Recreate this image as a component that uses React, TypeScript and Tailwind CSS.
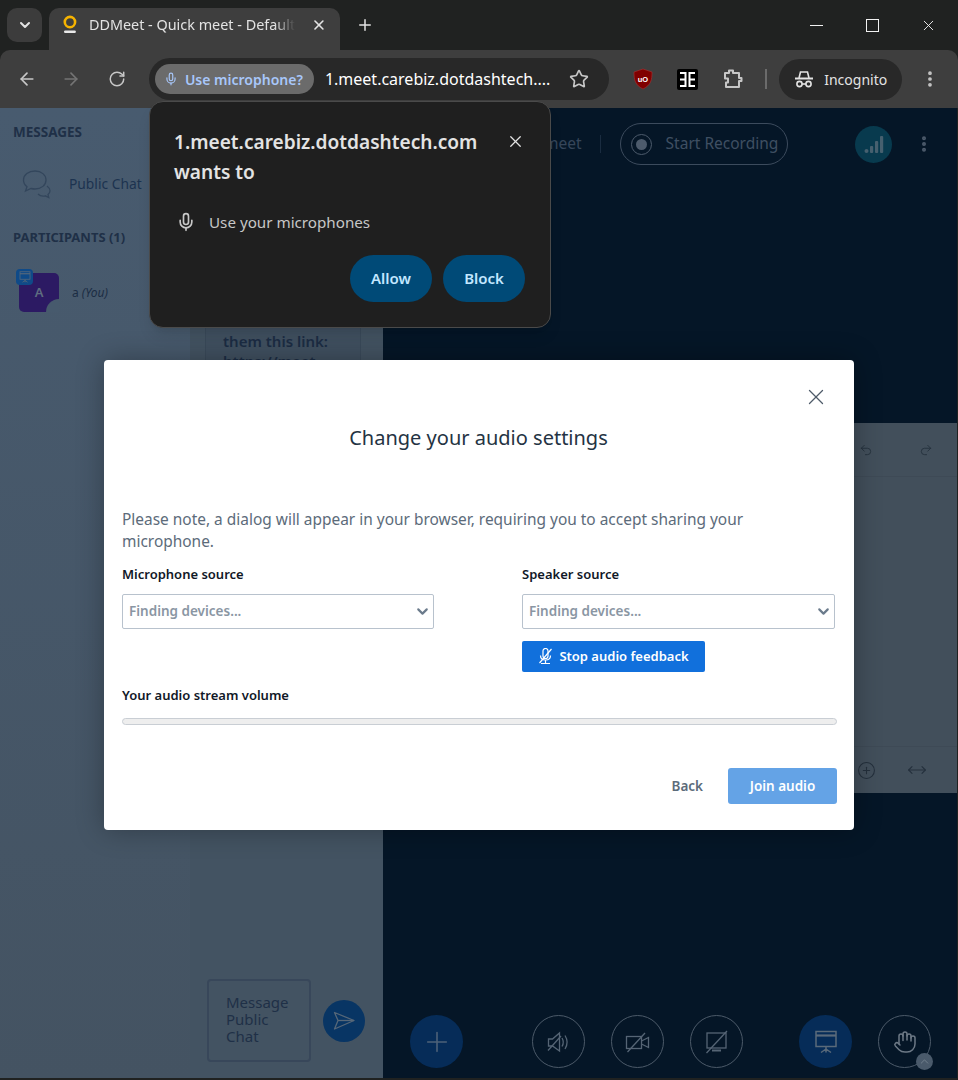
import React from 'react';
import {
  ArrowLeft,
  ArrowRight,
  ChevronDown,
  ChevronUp,
  CirclePlus,
  EllipsisVertical,
  Hand,
  Mic,
  MoveHorizontal,
  Plus,
  Redo2,
  RotateCw,
  Star,
  Undo2,
  X,
} from 'lucide-react';

const uiFont = 'font-["Noto_Sans",sans-serif]';

const Favicon = () => (
  <svg width="16" height="20" viewBox="0 0 16 20">
    <circle cx="8" cy="7" r="5.2" fill="none" stroke="#f5b301" strokeWidth="2.6" />
    <rect x="2" y="15.5" width="12" height="2.5" rx="1.2" fill="#e9e9e9" />
  </svg>
);

const IncognitoIcon = () => (
  <svg width="20" height="18" viewBox="0 0 20 18" fill="none" stroke="#e3e3e3" strokeWidth="1.6">
    <path d="M5 8l1.5-6h7L15 8" />
    <path d="M1 8.5h18" strokeWidth="2" />
    <circle cx="5.5" cy="14" r="2.6" />
    <circle cx="14.5" cy="14" r="2.6" />
    <path d="M8 14h4" />
  </svg>
);

const UBlockIcon = () => (
  <svg width="20" height="22" viewBox="0 0 20 22">
    <path d="M10 1l9 3c0 8-1 13-9 17C2 17 1 12 1 4z" fill="#800000" stroke="#a33" strokeWidth="0.6" />
    <text x="10" y="13.5" textAnchor="middle" fontSize="7.5" fontWeight="700" fill="#fff" fontFamily="Liberation Sans, sans-serif">
      uO
    </text>
  </svg>
);

const ReaderIcon = () => (
  <svg width="21" height="21" viewBox="0 0 21 21">
    <rect width="21" height="21" rx="2" fill="#000" />
    <path d="M3 3h6.500v15H3v-2h4.500v-4.500H3v-2h4.500V5H3z" fill="#fff" />
    <path d="M11.500 3H18v2h-4.500v4.500H18v2h-4.500V16H18v2h-6.500z" fill="#fff" />
  </svg>
);

const ExtensionIcon = () => (
  <svg width="22" height="22" viewBox="0 0 22 22" fill="none" stroke="#c7c7c7" strokeWidth="2" strokeLinejoin="round">
    <path d="M3 5h4V2.500h4V5h6v5h2.500v3H17v6H4v-4.500h2v-4H3z" />
  </svg>
);

const SignalIcon = () => (
  <svg width="20" height="20" viewBox="0 0 20 20" fill="#46606f">
    <circle cx="2.500" cy="17" r="2" />
    <rect x="6" y="12" width="3.200" height="7" rx="1" />
    <rect x="11" y="7" width="3.200" height="12" rx="1" />
    <rect x="16" y="2" width="3.200" height="17" rx="1" />
  </svg>
);

const PresentationIcon = ({ size = 24, color = '#5a6a7a' }: { size?: number; color?: string }) => (
  <svg width={size} height={size} viewBox="0 0 24 24" fill="none" stroke={color} strokeWidth="1.500">
    <rect x="2" y="1.500" width="20" height="15" />
    <path d="M2 5.500h20" strokeWidth="2.200" />
    <path d="M12 17v2M12 19l-5 3.500M12 19l5 3.500M12 19v3.500" />
  </svg>
);

const ChatIcon = () => (
  <svg width="32" height="32" viewBox="0 0 32 32" fill="none" stroke="#33465c" strokeWidth="1.300">
    <path d="M15 3C8.500 3 3.500 6.800 3.500 12c0 2.700 1.300 5 3.500 6.700L5.500 23l5.500-2.500c1.300.3 2.600.5 4 .5 6.500 0 11-4 11-9S21.500 3 15 3z" />
    <path d="M27 18c2 1.500 3 3 3 4.800 0 1.500-.8 2.800-2 3.800l.8 3-3.500-1.800c-2.500.5-5.500 0-7.300-1.800" />
  </svg>
);

const SendIcon = () => (
  <svg width="22" height="20" viewBox="0 0 22 20" fill="none" stroke="#566778" strokeWidth="1.300" strokeLinejoin="round">
    <path d="M1.500 1.500L21 9.500 1.500 18 5 9.500z" />
    <path d="M5 9.500h16" />
  </svg>
);

const MutedSpeakerIcon = () => (
  <svg width="26" height="26" viewBox="0 0 26 26" fill="none" stroke="#566575" strokeWidth="1.300">
    <path d="M2.500 10h4l7-6v18l-7-5h-4z" />
    <path d="M16 9c1.500 2.500 1.500 6 0 8.500M19 6.500c2.500 4 2.500 9.500 0 13.500" />
    <path d="M2 21.500L15 7" />
  </svg>
);

const MutedVideoIcon = () => (
  <svg width="26" height="26" viewBox="0 0 26 26" fill="none" stroke="#566575" strokeWidth="1.300">
    <rect x="1.500" y="7.500" width="15" height="12" />
    <path d="M16.500 12l7-3.500v10l-7-3.500" />
    <path d="M2.500 23L20 4" />
  </svg>
);

const MutedScreenIcon = () => (
  <svg width="26" height="26" viewBox="0 0 26 26" fill="none" stroke="#566575" strokeWidth="1.300">
    <rect x="3" y="4" width="19" height="15" />
    <path d="M8 21.500h9" strokeWidth="2" />
    <path d="M2.500 24L23 2" />
  </svg>
);

const FeedbackMicIcon = () => (
  <svg width="15" height="17" viewBox="0 0 15 17" fill="none" stroke="#fff" strokeWidth="1.200">
    <path d="M5 3a2.500 2.500 0 015 0v5a2.500 2.500 0 01-5 0z" />
    <path d="M2.500 7.500c0 3 2 4.500 5 4.500s5-1.500 5-4.500M7.500 12v3M3 15.500h9" />
    <path d="M1.500 15L13.500 1" />
  </svg>
);

const CircleButton = ({ children, active }: { children: React.ReactNode; active?: boolean }) => (
  <div
    className={`w-[53px] h-[53px] rounded-full flex items-center justify-center shrink-0 ${
      active ? 'bg-[#062c58]' : 'border border-[#4c5a69]'
    }`}
  >
    {children}
  </div>
);

const DeviceSelect = () => (
  <div className="h-[35px] border border-[#b8c2cd] rounded-[2px] flex items-center justify-between pl-[6px] pr-[2px] bg-white">
    <span className="text-[13.500px] font-semibold text-[#8a96a3]">Finding devices...</span>
    <ChevronDown className="w-[17px] h-[17px] text-[#6b7b8c]" strokeWidth={3} />
  </div>
);

const TabStrip = () => (
  <div className="h-[50px] bg-[#202221] flex items-start shrink-0 relative">
    <div className="w-[35px] h-[34px] mt-[8px] ml-[7px] rounded-[10px] bg-[#3c3c3c] flex items-center justify-center">
      <ChevronDown className="w-[16px] h-[16px] text-[#e3e3e3]" strokeWidth={3} />
    </div>
    <div className="w-[291px] h-[42px] mt-[8px] ml-[7px] rounded-t-[10px] bg-[#3e3e3e] flex items-center pl-[13px] pr-[13px] pb-[8px]">
      <Favicon />
      <span className="ml-[11px] w-[207px] text-[14.400px] text-[#e3e3e3] whitespace-nowrap [mask-image:linear-gradient(to_right,black_90%,transparent)]">
        DDMeet - Quick meet - Default
      </span>
      <X className="ml-[16px] w-[16px] h-[16px] text-[#e3e3e3]" strokeWidth={2.500} />
    </div>
    <Plus className="ml-[16px] mt-[16px] w-[18px] h-[18px] text-[#e3e3e3]" strokeWidth={2} />
    <div className="ml-auto flex items-center h-[50px] text-[#f2f2f2]">
      <div className="w-[13px] h-px bg-[#f2f2f2]" />
      <div className="w-[13px] h-[13px] border border-[#f2f2f2] ml-[43px]" />
      <X className="ml-[41px] mr-[21px] w-[17px] h-[17px]" strokeWidth={1.300} />
    </div>
  </div>
);

const Toolbar = () => (
  <div className="h-[58px] bg-[#3e3e3e] rounded-t-[10px] flex items-center pl-[17px] pr-[18px] shrink-0">
    <ArrowLeft className="w-[20px] h-[20px] text-[#c7c7c7]" strokeWidth={2} />
    <ArrowRight className="ml-[24px] w-[20px] h-[20px] text-[#747474]" strokeWidth={2} />
    <RotateCw className="ml-[27px] w-[18px] h-[18px] text-[#c7c7c7]" strokeWidth={2} />
    <div className="ml-[23px] w-[461px] h-[42px] rounded-full bg-[#282828] flex items-center pl-[6px] pr-[20px]">
      <div className="h-[30px] w-[159px] rounded-full bg-[#6b6b6b] flex items-center pl-[9px]">
        <Mic className="w-[14px] h-[14px] text-[#a8c7fa]" strokeWidth={2} />
        <span className="ml-[7px] text-[14px] font-semibold text-[#a8c7fa] whitespace-nowrap">Use microphone?</span>
      </div>
      <span className="ml-[11px] text-[16px] text-white whitespace-nowrap">1.meet.carebiz.dotdashtech....</span>
      <Star className="ml-auto w-[20px] h-[20px] text-[#c7c7c7]" strokeWidth={2} />
    </div>
    <div className="ml-[24px] flex items-center gap-[24px]">
      <UBlockIcon />
      <ReaderIcon />
      <ExtensionIcon />
    </div>
    <div className="ml-[21px] w-[2px] h-[20px] bg-[#6b6b6b]" />
    <div className="ml-[12px] w-[123px] h-[41px] rounded-full bg-[#282828] flex items-center pl-[15px]">
      <IncognitoIcon />
      <span className="ml-[10px] text-[14px] text-[#e3e3e3]">Incognito</span>
    </div>
    <EllipsisVertical className="ml-[18px] w-[20px] h-[20px] text-[#c7c7c7]" strokeWidth={2.500} />
  </div>
);

const Sidebar = () => (
  <aside className="w-[190px] shrink-0 bg-gradient-to-b from-[#485b6f] to-[#445362] pt-[15px]">
    <p className="pl-[13px] text-[13.500px] font-bold text-[#1f3047] leading-[18px]">MESSAGES</p>
    <div className="mt-[27px] flex items-center pl-[20px]">
      <ChatIcon />
      <span className="ml-[17px] text-[13.800px] text-[#1c3350]">Public Chat</span>
    </div>
    <p className="mt-[28px] pl-[13px] text-[13px] font-bold text-[#1f3047] leading-[18px]">PARTICIPANTS (1)</p>
    <div className="mt-[27px] flex items-center pl-[19px]">
      <div className="relative w-[40px] h-[39px] rounded-[5px] bg-[#2c1a63] flex items-center justify-center text-[13px] font-semibold text-[#5f6d80]">
        A
        <div className="absolute -left-[3px] -top-[4px] w-[17px] h-[16px] rounded-[4px] bg-[#0f4a88] flex items-center justify-center">
          <PresentationIcon size={12} color="#5a6a7a" />
        </div>
        <div className="absolute right-0 bottom-0 w-[13px] h-[13px] rounded-tl-full bg-[#475a6d]" />
      </div>
      <span className="ml-[13px] text-[12px] text-[#1c2d44]">
        a <em>(You)</em>
      </span>
    </div>
  </aside>
);

const ChatPanel = () => (
  <section className="w-[193px] shrink-0 bg-[#435362] flex flex-col">
    <div className="ml-[15px] w-[156px] h-[272px] bg-[#405060] border-x border-[#3a4a5a] pt-[223px] pl-[17px] overflow-hidden shrink-0">
      <p className="text-[15px] font-semibold leading-[20px] text-[#1c2d44]">them this link:</p>
      <p className="text-[15px] font-semibold leading-[20px] text-[#1c2d44]">https://meet</p>
    </div>
    <div className="mt-auto mb-[16px] ml-[17px] flex items-center gap-[12px]">
      <div className="w-[104px] h-[83px] border-2 border-[#38475a] rounded-[4px] pl-[17px] pb-[2px] flex flex-col justify-center text-[15px] leading-[17px] text-[#1f3047]">
        <span>Message</span>
        <span>Public</span>
        <span>Chat</span>
      </div>
      <div className="w-[42px] h-[42px] rounded-full bg-[#083564] flex items-center justify-center">
        <SendIcon />
      </div>
    </div>
  </section>
);

const Whiteboard = () => (
  <div className="h-[370px] bg-[#424f5b] flex flex-col shrink-0">
    <div className="h-[54px] border-b border-[#3e4a56] flex items-center justify-end">
      <Undo2 className="mr-[46px] w-[14px] h-[14px] text-[#24303c]" strokeWidth={1.500} />
      <Redo2 className="mr-[24px] w-[14px] h-[14px] text-[#24303c]" strokeWidth={1.500} />
    </div>
    <div className="flex-1" />
    <div className="h-[47px] border-t border-[#3e4a56] flex items-center justify-end">
      <CirclePlus className="mr-[31px] w-[19px] h-[19px] text-[#24303c]" strokeWidth={1.300} />
      <MoveHorizontal className="mr-[30px] w-[20px] h-[20px] text-[#24303c]" strokeWidth={1.300} />
    </div>
  </div>
);

const MainArea = () => (
  <main className="flex-1 min-w-0 bg-[#051627] flex flex-col">
    <div className="h-[72px] shrink-0 flex items-center pr-[23px]">
      <span className="ml-[161px] text-[15.500px] text-[#36465a]">meet</span>
      <div className="ml-[18px] w-px h-[18px] bg-[#1a2c40]" />
      <div className="ml-[19px] h-[42px] w-[168px] rounded-full border border-[#3c4b5d] flex items-center pl-[10px]">
        <div className="w-[21px] h-[21px] rounded-full border border-[#4d5b6c] flex items-center justify-center">
          <div className="w-[11px] h-[11px] rounded-full bg-[#4d5b6c]" />
        </div>
        <span className="ml-[14px] text-[15.500px] text-[#3f4f62] whitespace-nowrap">Start Recording</span>
      </div>
      <div className="ml-auto w-[37px] h-[37px] rounded-full bg-[#083a4e] flex items-center justify-center">
        <SignalIcon />
      </div>
      <EllipsisVertical className="ml-[22px] w-[20px] h-[20px] text-[#4d5b6c]" strokeWidth={2.800} />
    </div>
    <div className="mt-[243px]">
      <Whiteboard />
    </div>
    <div className="mt-auto pb-[10px] flex items-center pl-[27px] pr-[26px]">
      <CircleButton active>
        <Plus className="w-[32px] h-[32px] text-[#4d6178]" strokeWidth={1.200} />
      </CircleButton>
      <div className="ml-[69px]">
        <CircleButton>
          <MutedSpeakerIcon />
        </CircleButton>
      </div>
      <div className="ml-[26px]">
        <CircleButton>
          <MutedVideoIcon />
        </CircleButton>
      </div>
      <div className="ml-[26px]">
        <CircleButton>
          <MutedScreenIcon />
        </CircleButton>
      </div>
      <div className="ml-[56px]">
        <CircleButton active>
          <PresentationIcon />
        </CircleButton>
      </div>
      <div className="ml-[26px] relative">
        <CircleButton>
          <Hand className="w-[24px] h-[24px] text-[#6d7986]" strokeWidth={1.500} />
        </CircleButton>
        <div className="absolute -right-[2px] -bottom-[2px] w-[17px] h-[17px] rounded-full bg-[#4a5a6b] flex items-center justify-center">
          <ChevronUp className="w-[13px] h-[13px] text-[#7a8794]" strokeWidth={1.500} />
        </div>
      </div>
    </div>
  </main>
);

const PermissionPopup = () => (
  <div className="absolute left-[149px] top-[101px] w-[402px] h-[227px] rounded-[14px] bg-[#1f1f1f] border border-[#4a4a4a] shadow-lg pl-[24px] pr-[25px] pt-[25px]">
    <div className="flex items-start justify-between">
      <p className="text-[19.100px] font-semibold leading-[30px] text-[#e3e3e3] whitespace-nowrap">
        1.meet.carebiz.dotdashtech.com
        <br />
        wants to
      </p>
      <X className="mt-[5px] w-[19px] h-[19px] text-[#e3e3e3]" strokeWidth={1.600} />
    </div>
    <div className="mt-[24px] flex items-center">
      <Mic className="w-[20px] h-[20px] text-[#c7c7c7] ml-[2px]" strokeWidth={2} />
      <span className="ml-[13px] text-[15.200px] text-[#c7c7c7]">Use your microphones</span>
    </div>
    <div className="mt-[21px] flex justify-end gap-[11px]">
      <div className="w-[82px] h-[47px] rounded-full bg-[#004a77] flex items-center justify-center text-[15px] font-semibold text-[#c2e7ff]">
        Allow
      </div>
      <div className="w-[82px] h-[47px] rounded-full bg-[#004a77] flex items-center justify-center text-[15px] font-semibold text-[#c2e7ff]">
        Block
      </div>
    </div>
  </div>
);

const AudioDialog = () => (
  <div className="absolute left-[104px] top-[360px] w-[750px] h-[470px] rounded-[4px] bg-white pl-[18px] pr-[17px] shadow-[0_0_28px_rgba(0,0,0,0.3)]">
    <div className="flex justify-end pt-[24px] pr-[8px]">
      <X className="w-[26px] h-[26px] text-[#4e5b69]" strokeWidth={1.200} />
    </div>
    <h2 className="mt-[14px] text-center text-[20px] leading-[28px] text-[#243343] -translate-x-[1px]">
      Change your audio settings
    </h2>
    <p className="mt-[56px] text-[15.450px] leading-[22px] text-[#5c6b7a] w-[640px]">
      Please note, a dialog will appear in your browser, requiring you to accept sharing your microphone.
    </p>
    <div className="mt-[12px] flex">
      <div className="w-[312px]">
        <p className="text-[13px] font-semibold leading-[20px] text-[#111827]">Microphone source</p>
        <div className="mt-[10px]">
          <DeviceSelect />
        </div>
      </div>
      <div className="ml-[88px] w-[313px]">
        <p className="text-[13px] font-semibold leading-[20px] text-[#111827]">Speaker source</p>
        <div className="mt-[10px]">
          <DeviceSelect />
        </div>
        <div className="mt-[12px] w-[183px] h-[31px] rounded-[2px] bg-[#1170dc] flex items-center justify-center text-[13px] font-semibold text-white">
          <span className="mr-[6px]">
            <FeedbackMicIcon />
          </span>
          Stop audio feedback
        </div>
      </div>
    </div>
    <p className="mt-[13px] text-[13px] font-semibold leading-[20px] text-[#111827]">Your audio stream volume</p>
    <div className="mt-[13px] h-[7px] rounded-full bg-[#eeeeee] border border-[#c9ced4]" />
    <div className="mt-[43px] flex items-center justify-end">
      <span className="text-[13.500px] font-semibold text-[#5c6b7a]">Back</span>
      <div className="ml-[25px] w-[109px] h-[36px] rounded-[3px] bg-[#64a3e6] flex items-center justify-center text-[13.500px] font-semibold text-white">
        Join audio
      </div>
    </div>
  </div>
);

export default function App() {
  return (
    <div className={`relative w-[958px] h-[1080px] overflow-hidden bg-[#202221] flex flex-col ${uiFont}`}>
      <TabStrip />
      <Toolbar />
      <div className="h-[970px] flex shrink-0">
        <Sidebar />
        <ChatPanel />
        <MainArea />
        <div className="w-px shrink-0 bg-[#202221]" />
      </div>
      <PermissionPopup />
      <AudioDialog />
    </div>
  );
}
